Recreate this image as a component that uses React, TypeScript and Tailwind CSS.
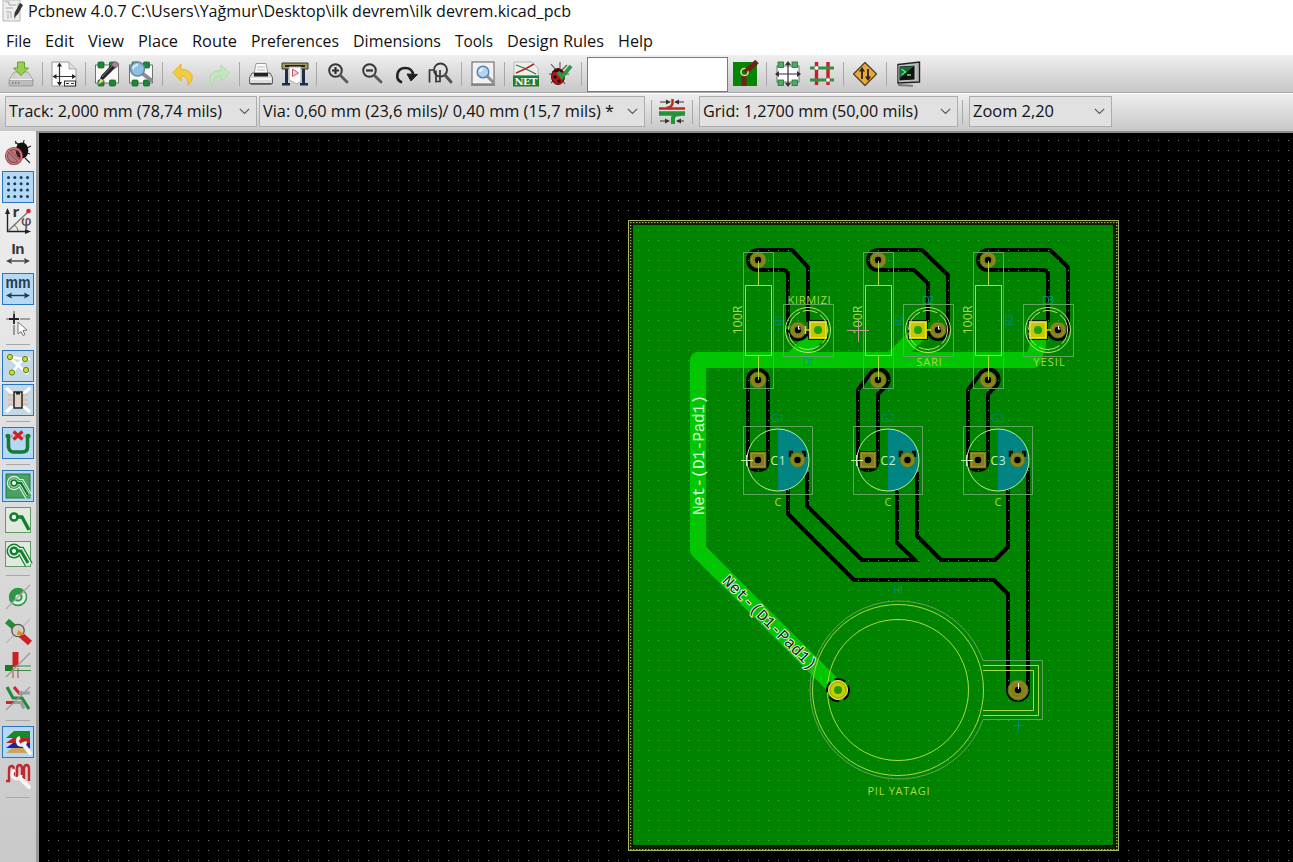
import React from 'react';

type Kids = { children?: React.ReactNode };

const Ico = ({ children }: Kids) => (
  <svg width="26" height="26" viewBox="0 0 26 26" className="block shrink-0 overflow-visible">{children}</svg>
);

const Magnifier = ({ sign }: { sign: string }) => (
  <Ico>
    <circle cx="10.500" cy="9.500" r="6.300" fill="none" stroke="#383838" strokeWidth="2" />
    <path d="M15.500 14.500l6.500 6.500" stroke="#5a5a5a" strokeWidth="2.800" strokeLinecap="round" />
    <path d={sign} stroke="#303030" strokeWidth="2.200" />
  </Ico>
);

const Chip = () => (
  <>
    <rect x="1.500" y="4" width="23" height="18" fill="#f8f8f8" stroke="#555" strokeWidth=".8" />
    {[4, 15.5].map((x) => [1, 19].map((y) => <rect key={x + '-' + y} x={x} y={y} width="6" height="6" rx="1" fill="#1c8a34" stroke="#14602a" strokeWidth=".8" />))}
  </>
);

const Arrows = ({ y, c = '#333' }: { y: number; c?: string }) => (
  <g transform={`translate(0 ${y})`} fill={c}>
    <path d="M4 0h18" stroke={c} strokeWidth="1.4" />
    <path d="M1 0l6-3-1 3 1 3zM25 0l-6-3 1 3-1 3z" />
  </g>
);

const icons: Record<string, React.ReactNode> = {
  save: <Ico><path d="M6 11h14l5 8v5a1 1 0 0 1-1 1H2a1 1 0 0 1-1-1v-5z" fill="#d2d2d2" stroke="#9b9b9b" strokeWidth=".8" /><path d="M1.500 19h23v5.500h-23z" fill="#bdbdbd" stroke="#959595" strokeWidth=".6" /><path d="M2 18.500h22" stroke="#f0f0f0" /><path d="M4 22h1.500M7 22h1.500M10 22h1.500" stroke="#777" strokeWidth="1.500" /><path d="M9.500 1h7v6h4L13 14.500 5.500 7h4z" fill="#9ace4c" stroke="#65a031" /></Ico>,
  page: <Ico><path d="M1 1h17l7 7v17H1z" fill="#fcfcfc" stroke="#9a9a9a" /><path d="M18 1v7h7" fill="#ddd" stroke="#aaa" /><path d="M8.500 3v21M3 15.500h20" stroke="#333" strokeWidth="1.200" /><path d="M8.500 1.500l2.500 4h-5zM8.500 25l-2.500-4h5zM1.500 15.500l4-2.500v5zM25 15.500l-4-2.500v5z" fill="#222" /><rect x="13.500" y="20" width="11" height="5" fill="#fff" stroke="#333" /><path d="M15 22.500h3m2 0h3" stroke="#333" /></Ico>,
  modedit: <Ico><Chip /><path d="M5 21l2-6L18 3l4 3L10 18z" fill="#252525" /><path d="M17 4l3-3q3-1 5 2l-3 4z" fill="#a8809c" stroke="#70506a" strokeWidth=".6" /><path d="M4 23.500l2.500-6 3.500 2.500z" fill="#e6d87c" /><path d="M8 16L19 4" stroke="#777" strokeWidth="1" /></Ico>,
  find: <Ico><Chip /><path d="M15 13l8 6" stroke="#8b8b96" strokeWidth="4" strokeLinecap="round" /><circle cx="9.500" cy="8" r="7" fill="#8fc0e2" stroke="#6787a2" strokeWidth="1.500" /><path d="M5 8a5 5 0 0 1 5-4" stroke="#d8efff" strokeWidth="2" fill="none" /></Ico>,
  undo: <Ico><path d="M10 3v5.500c11 0 15 8 7 16 0-7-1-9-7-9.500v5L2 11.500z" fill="#f4cc3e" stroke="#dda828" strokeWidth=".8" strokeLinejoin="round" /></Ico>,
  redo: <Ico><path d="M16 4v5.500c-10 0-14 7-8 15 0-6 1-9 8-9.500v5l8.500-8z" fill="#bfe8bb" stroke="#a8d7a5" strokeWidth=".8" strokeLinejoin="round" /></Ico>,
  print: <Ico><path d="M8 2.500h10l2 10.500H6z" fill="#fafafa" stroke="#888" strokeWidth=".8" /><path d="M9 6h8M9 9h8" stroke="#bbb" /><path d="M4 12h18l2.500 4.500v6h-23v-6z" fill="#dcdcdc" stroke="#555" strokeWidth=".9" /><path d="M6 12h14v3.500H6z" fill="#222" /><path d="M3 18h20" stroke="#fff" strokeWidth="1.500" /><path d="M2.500 22h21v1.800h-21z" fill="#555" /></Ico>,
  plot: <Ico><path d="M0 2h26v6H0z" fill="#a49a64" stroke="#3f3a20" /><path d="M3 5h20" stroke="#222" strokeWidth="2" /><path d="M3 8h3v15H3zM20 8h3v15h-3zM0 22h8v2.500H0zM18 22h8v2.500h-8z" fill="#1d2d4d" /><path d="M7 6h12v14l-4 3-8-4z" fill="#fff" stroke="#aaa" /><path d="M10.500 8l6 4-6 3.500z" fill="#f8ccd0" stroke="#d2545e" /></Ico>,
  zin: <Magnifier sign="M7 9.500h7M10.500 6v7" />,
  zout: <Magnifier sign="M7 9.500h7" />,
  redraw: <Ico><path d="M9 21.500C1 18 4 7 12 7c5 0 8 3 8 7" fill="none" stroke="#202020" strokeWidth="2.600" /><path d="M14 13l10.500.5-6.500 6.500z" fill="#202020" stroke="#202020" strokeLinejoin="round" /></Ico>,
  fit: <Ico><path d="M6 9H2.500v12.500M9 21.500V9.500M9 20.500h4V9" fill="none" stroke="#383838" strokeWidth="1.700" /><circle cx="13.500" cy="9" r="6.500" fill="none" stroke="#383838" strokeWidth="1.900" /><path d="M18 14l6 7" stroke="#505050" strokeWidth="2.800" strokeLinecap="round" /></Ico>,
  zarea: <Ico><rect x="2" y="1" width="22" height="22" fill="#f2f2f2" stroke="#5f5f5f" /><path d="M1 24h24" stroke="#777" strokeWidth="1.500" /><path d="M17 15l6 6" stroke="#8e8e98" strokeWidth="3" strokeLinecap="round" /><circle cx="13" cy="11" r="5.800" fill="#b4d4ee" stroke="#5885b6" strokeWidth="1.500" /><path d="M10 11a3 3 0 0 1 3-3" stroke="#e8f5ff" strokeWidth="2" fill="none" /></Ico>,
  net: <Ico><path d="M1 1h18l6 6v8H1z" fill="#eee" stroke="#aaa" strokeWidth=".8" /><path d="M3 4l8 3 12 6" stroke="#267832" strokeWidth="1.200" fill="none" /><path d="M3 12l9-4 9-5" stroke="#b12a24" strokeWidth="1.500" fill="none" /><rect x="0" y="14.500" width="26" height="11" fill="#1e7d2e" /><text x="13" y="24" fontSize="10" fontWeight="700" fill="#fff" textAnchor="middle" textLength="23" fontFamily="'DejaVu Serif', serif">NET</text></Ico>,
  drc: <Ico><path d="M4 3l5 6M13 1v6M2 13h20M4 22l5-5M18 23l-4-6M20 4l-6 6" stroke="#555" strokeWidth="1.100" /><ellipse cx="11" cy="15.500" rx="6.500" ry="8" fill="#b41418" stroke="#540608" /><path d="M5 11q6-7 12 0z" fill="#311" /><circle cx="8" cy="16" r="1.500" /><circle cx="12" cy="20" r="1.500" /><path d="M11 11l4 5 9-11" fill="none" stroke="#2a9a42" strokeWidth="3.800" /></Ico>,
  layer: <Ico><rect x="1" y="1" width="24" height="24" fill="#068406" /><path d="M25 0.500L15 10" stroke="#6e2418" strokeWidth="5" /><path d="M12 11v14" stroke="#6e2418" strokeWidth="5" /><circle cx="12.500" cy="11" r="3.600" fill="#068406" stroke="#e6dca2" strokeWidth="1.500" /><path d="M12.500 11l5-5" stroke="#6e2418" strokeWidth="3.500" /></Ico>,
  modmove: <Ico><rect x="2" y="5" width="22" height="16" fill="#fff" stroke="#555" strokeWidth=".8" />{[3, 17].map((x) => [1, 19].map((y) => <rect key={x + '-' + y} x={x} y={y} width="5.500" height="5.500" fill="#4aac64" stroke="#276b3a" strokeWidth=".8" />))}<path d="M13 2v22M1 13h24" stroke="#333" strokeWidth="1.200" /><path d="M13 0l3 4h-6zM13 26l-3-4h6zM0 13l4-3v6zM26 13l-4-3v6z" fill="#333" /></Ico>,
  tracks: <Ico><path d="M7.500 1v23M19 1v23" stroke="#c3202a" strokeWidth="3.400" /><path d="M1 7h24M1 19h24" stroke="#329239" strokeWidth="2.800" /><circle cx="7.500" cy="7" r="2.100" fill="#fff" stroke="#9a7a7a" strokeWidth=".6" /><circle cx="19" cy="19" r="2.100" fill="#fff" stroke="#9a7a7a" strokeWidth=".6" /></Ico>,
  router: <Ico><path d="M13 1.500L24.500 13 13 24.500 1.500 13z" fill="#eba83a" stroke="#4d4025" strokeWidth="1.200" strokeLinejoin="round" /><path d="M10 9v9M16 8v9" stroke="#222" strokeWidth="1.800" /><path d="M10 6l3 4.500H7zM16 20l-3-4.500h6z" fill="#222" /></Ico>,
  term: <Ico><path d="M3 3.500l21.500-2.500v20L3 22z" fill="#b6b6b6" stroke="#222" strokeWidth="1.400" /><path d="M4 5l16-1v15L4 20z" fill="#111" stroke="#e0e0e0" strokeWidth=".8" /><path d="M5 6l14-1-14 12z" fill="#176c3c" /><path d="M6.500 8l4 3-4 3M12 14h4" fill="none" stroke="#5de58a" strokeWidth="1.400" /><path d="M3 24l15 .8" stroke="#777" strokeWidth="1.800" /></Ico>,
  widths: <Ico><path d="M0 9.500h26" stroke="#bd2a22" strokeWidth="2.500" /><path d="M0 14.500h26" stroke="#22953a" strokeWidth="4.500" /><path d="M13.500 0v4q0 4-6 5" fill="none" stroke="#bd2a22" strokeWidth="2.500" /><path d="M22 15q-8 0-8 4v6" fill="none" stroke="#22953a" strokeWidth="4" /><path d="M1 3h9M25 3h-8M1 22h8M25 22h-7" stroke="#333" strokeWidth="1.200" /><path d="M12 3L7 .5v5zM15 3l5-2.500v5zM11 22l-5-2.500v5zM17 22l5-2.500v5z" fill="#333" /></Ico>,
  nodrc: <Ico><path d="M10 1l4 5M19 0l-1 6M22 8l4-2M22 13l3 1M20 18l5 5M10 3l9 2" stroke="#222" strokeWidth="1.100" fill="none" /><ellipse cx="17" cy="10.500" rx="6.300" ry="8" fill="#111" /><circle cx="9" cy="16" r="7.600" fill="#5a2a2e" fillOpacity=".55" stroke="#9b3c42" strokeWidth="3" /><path d="M4 11l10 10" stroke="#9b3c42" strokeWidth="3" /><circle cx="9" cy="16" r="7.600" fill="none" stroke="#cf7b80" strokeWidth="1.400" /><path d="M4 11l10 10" stroke="#cf7b80" strokeWidth="1.400" /></Ico>,
  grid: <Ico>{[3.5, 9.8, 16.1, 22.5].map((x) => [3.5, 9.8, 16.1, 22.5].map((y) => <circle key={x + '-' + y} cx={x} cy={y} r="1.500" fill="#173c5c" />))}</Ico>,
  polar: <Ico><path d="M2.500 2v21.500H23" fill="none" stroke="#222" strokeWidth="1.400" /><path d="M2.500 0l2.500 6H0zM26 23.500l-6-2.500v5z" fill="#222" /><path d="M3 23L23 4" stroke="#777" strokeWidth="1.500" /><path d="M9 17q4 2 4 6" fill="none" stroke="#666" /><circle cx="23.500" cy="3" r="2.300" fill="#d22635" /><text x="7.500" y="9" fontSize="15" fontWeight="700" fontFamily="'Open Sans', sans-serif" fill="#333">r</text><text x="16" y="18" fontSize="14" fontWeight="600" fontFamily="'Open Sans', sans-serif" fill="#5a4848">φ</text></Ico>,
  inch: <Ico><text x="13" y="11.500" fontSize="15" fontWeight="600" textAnchor="middle" fontFamily="'Liberation Sans', sans-serif" fill="#333" textLength="13">In</text><Arrows y={19} c="#444" /></Ico>,
  mm: <Ico><text x="13" y="11.500" fontSize="16" fontWeight="700" textAnchor="middle" fontFamily="'Liberation Sans', sans-serif" fill="#263c50" textLength="25" lengthAdjust="spacingAndGlyphs">mm</text><Arrows y={19.5} c="#20394f" /></Ico>,
  cursor: <Ico><path d="M9 1v3M1 9h3M15 9h10M9 15v10" stroke="#888" strokeWidth="1.600" /><path d="M9 4v10M4 9h10" stroke="#222" strokeWidth="1.800" /><path d="M13 12l9 8-4 .5 2 4-2 1-2-4-3 2.500z" fill="#fff" stroke="#666" strokeWidth=".9" /></Ico>,
  rats: <Ico><path d="M4 4l19 17M19 5L7 20M4 4l15 2 6 0M19 5L11 13" stroke="#fff" strokeWidth="2.500" fill="none" />{[[5, 4], [20, 6], [7, 19.5], [21, 17]].map(([x, y]) => <circle key={x} cx={x} cy={y} r="2.600" fill="#c8df2e" stroke="#6a7a14" />)}</Ico>,
  modrats: <Ico><path d="M9 8L1 1M9 18l-8 7M17 8l8-7M17 18l8 7" stroke="#fff" strokeWidth="3" /><path d="M3 8h20M3 12.800h20M3 17.500h20" stroke="#e8bda9" strokeWidth="2.500" /><rect x="9" y="5" width="8" height="16" fill="#dcd5c4" stroke="#222" strokeWidth="1.500" /><path d="M11 5h4v2.500h-4z" fill="#222" /></Ico>,
  autodel: <Ico><path d="M0 6h8M18 6h8" stroke="#aaa" strokeWidth="3" /><path d="M3.500 7v10q1 5 5 5h9q5 0 5-5V7" fill="none" stroke="#147a34" strokeWidth="3.600" /><circle cx="3" cy="6" r="2.300" fill="#147a34" /><circle cx="23" cy="6" r="2.300" fill="#147a34" /><path d="M8.500 1.500l9 8M17.500 1.500l-9 8" stroke="#cf2128" strokeWidth="3.200" /></Ico>,
  zfill: <Ico><rect x="1" y="1" width="24" height="24" fill="#48a063" stroke="#1f7d3a" /><path d="M9 10h7l8 14" fill="none" stroke="#e8f6e8" strokeWidth="8" /><circle cx="9" cy="10" r="7.200" fill="#e8f6e8" /><path d="M9 10h7l8 14" fill="none" stroke="#48a063" strokeWidth="6" /><circle cx="9" cy="10" r="6" fill="#48a063" /><path d="M9 10h7l7 12" fill="none" stroke="#e8f6e8" strokeWidth="3.800" /><circle cx="9" cy="10" r="4.200" fill="#0f7a2c" stroke="#e8f6e8" strokeWidth=".8" /><path d="M12 10h4l7 12" fill="none" stroke="#0f7a2c" strokeWidth="2.400" /><circle cx="9" cy="10" r="2" fill="#fff" /></Ico>,
  znone: <Ico><rect x=".5" y=".5" width="25" height="25" fill="#e2eadf" stroke="#5d9d62" /><path d="M10 10h7l7 13" fill="none" stroke="#11802d" strokeWidth="3.400" /><circle cx="9" cy="10" r="3.500" fill="#fff" stroke="#11802d" strokeWidth="2.600" /></Ico>,
  zoutl: <Ico><rect x=".5" y=".5" width="25" height="25" fill="#e2eadf" stroke="#5d9d62" /><path d="M9 10h7l8 14" fill="none" stroke="#11802d" strokeWidth="8.500" /><circle cx="9" cy="10" r="7.500" fill="#11802d" /><path d="M9 10h7l8 14" fill="none" stroke="#e8f2e6" strokeWidth="6" /><circle cx="9" cy="10" r="6" fill="#e8f2e6" /><path d="M10 10h6l7 12" fill="none" stroke="#11802d" strokeWidth="3" /><circle cx="9" cy="10" r="3.300" fill="#fff" stroke="#11802d" strokeWidth="2.500" /></Ico>,
  via: <Ico><circle cx="13" cy="13" r="9" fill="#2e9648" /><path d="M20 7a9 9 0 0 1-13 12z" fill="#e1ede0" /><circle cx="13" cy="13" r="8.500" fill="none" stroke="#2e9648" strokeWidth="1.300" /><circle cx="13" cy="13" r="3.600" fill="#dcebdc" stroke="#2e9648" strokeWidth="2" /><path d="M1 25L25 1" stroke="#aaa" strokeWidth="1.200" /></Ico>,
  trk: <Ico><path d="M2 3l8 7" stroke="#258d32" strokeWidth="6" /><path d="M16 17l9 8" stroke="#ce1e28" strokeWidth="6" /><path d="M1 25L25 1" stroke="#bbb" strokeWidth="1.200" /><circle cx="13" cy="12.500" r="6.200" fill="#d0cfc4" stroke="#555" strokeWidth="1.300" /><path d="M12 17l1-5 5 3 1 2z" fill="#e68a26" /></Ico>,
  contrast: <Ico><rect x="0" y="13" width="8" height="6" fill="#177c22" /><rect x="7.500" y="0" width="6" height="15" fill="#cc1f26" /><path d="M8 16v10M13 16v10" stroke="#c4555a" strokeWidth="1.200" /><path d="M9 14h17M9 18.500h17" stroke="#3d8a45" strokeWidth="1.200" /><path d="M1 25L25 1" stroke="#999" strokeWidth="1.200" /></Ico>,
  curved: <Ico><path d="M9 1l5 6h3M1 16.500h9" fill="none" stroke="#c42a30" strokeWidth="3" /><path d="M14 7h11M9 16.500h7l3 6" fill="none" stroke="#9c9c9c" strokeWidth="3" /><path d="M2 1l6 11h9l7 11" fill="none" stroke="#218d3c" strokeWidth="3.200" /><path d="M1 24L25 1" stroke="#999" strokeWidth="1.200" /></Ico>,
  layers: <Ico><path d="M1 24l7-6h17v6z" fill="#c9a75a" /><path d="M1 19l7-5h17v5z" fill="#24209a" /><path d="M1 14l7-5h17v5z" fill="#b72428" /><path d="M1 9l8-7h16v7z" fill="#178926" /><path d="M18 15l7 9" stroke="#f3f3f3" strokeWidth="4" strokeLinecap="round" /><path d="M15 8.500a4 4 0 1 0 5.500 4" fill="none" stroke="#f3f3f3" strokeWidth="3.200" /></Ico>,
  meander: <Ico><path d="M1 18h3V7q0-4 2.500-4T9 7v8h3V6q0-4 2.500-4T17 6v9h2V6q0-4 2.500-4T24 6v12" fill="none" stroke="#bf2a30" strokeWidth="2.400" /><path d="M15 15l9 9" stroke="#f5f5f5" strokeWidth="4" strokeLinecap="round" /><path d="M10 7a4.500 4.500 0 1 0 6 5" fill="none" stroke="#f5f5f5" strokeWidth="3.400" /></Ico>,
};

const TopIcon = ({ n }: { n: string }) => <button className="flex h-[34px] w-[34px] shrink-0 items-center justify-center">{icons[n]}</button>;
const VSep = () => <div className="flex w-[9px] shrink-0 justify-center"><div className="h-6 w-px bg-[#a8a8a8]" /></div>;
const HSep = () => <div className="flex h-[9px] shrink-0 items-center justify-center"><div className="h-px w-6 bg-[#a8a8a8]" /></div>;

const Bar = ({ names }: { names: string[] }) => <>{names.map((n, i) => (n === '|' ? <VSep key={i} /> : <TopIcon key={i} n={n} />))}</>;

const plain = 'flex h-8 w-8 items-center justify-center';
const lit = 'flex h-8 w-8 items-center justify-center border border-[#2a76bd] bg-[#b5d9f5]';
const soft = 'flex h-8 w-8 items-center justify-center border border-[#2a76bd] bg-[#c3d9e8]';

const side: [string, string][] = [
  ['nodrc', plain], ['grid', lit], ['polar', plain], ['inch', plain], ['mm', lit], ['cursor', plain], ['|', ''],
  ['rats', soft], ['modrats', soft], ['|', ''], ['autodel', lit], ['|', ''],
  ['zfill', lit], ['znone', plain], ['zoutl', plain], ['|', ''],
  ['via', plain], ['trk', plain], ['contrast', plain], ['curved', plain], ['|', ''],
  ['layers', lit], ['meander', plain], ['|', ''],
];

const Combo = ({ text, size, tw }: { text: string; size: string; tw: number }) => (
  <button className={`flex h-[31px] shrink-0 items-center justify-between border border-[#adadad] bg-[#e1e1e1] pl-[3px] pr-[6px] ${size}`}>
    <svg width={tw} height="24" className="block shrink-0 overflow-visible">
      <text x="0" y="17" fontSize="16.300" textLength={tw} lengthAdjust="spacingAndGlyphs" fill="#111">{text}</text>
    </svg>
    <svg width="11" height="7" viewBox="0 0 11 7"><path d="M.8.8l4.700 4.700L10.200.8" fill="none" stroke="#555" strokeWidth="1.100" /></svg>
  </button>
);

const menus: [string, string, number][] = [
  ['File', 'w-[39px]', 25], ['Edit', 'w-[43px]', 29], ['View', 'w-[50px]', 36], ['Place', 'w-[54px]', 40], ['Route', 'w-[59px]', 45],
  ['Preferences', 'w-[102px]', 88], ['Dimensions', 'w-[102px]', 88], ['Tools', 'w-[52px]', 38], ['Design Rules', 'w-[111px]', 97], ['Help', 'w-[50px]', 35],
];

const silk = '#a8dc40';
const fine = '#62a262';

const Pad = ({ x, y, r = 9 }: { x: number; y: number; r?: number }) => (
  <g><circle cx={x} cy={y} r={r - 1} fill="#857f1a" stroke="#4e7c14" /><circle cx={x} cy={y} r={r - 2.7} fill="none" stroke="#9a942a" strokeWidth=".8" /><circle cx={x} cy={y} r="3.200" fill="#000" /></g>
);

const Label = ({ x, y, w, s, c = silk, f = 11 }: { x: number; y: number; w: number; s: string; c?: string; f?: number }) => (
  <text x={x} y={y} fontSize={f} fill={c} textAnchor="middle" textLength={w} lengthAdjust="spacing" fontFamily="'Open Sans', sans-serif" fontWeight="400">{s}</text>
);

const Resistor = ({ x, id }: { x: number; id: string }) => (
  <g fill="none">
    <Pad x={x} y={260} /><Pad x={x} y={380} />
    <rect x={x - 14.5} y="252.500" width="30" height="136" stroke={fine} />
    <rect x={x - 12.5} y="285.500" width="26" height="70" stroke={silk} />
    <path d={`M${x + .5} 261v24M${x + .5} 356v24`} stroke={silk} />
    <g transform={`translate(${x - 16} 320) rotate(-90)`}><Label x={0} y={0} w={29} s="100R" f={12.5} /></g>
    <g transform={`translate(${x + 25} 320) rotate(-90)`}><Label x={0} y={0} w={12} s={id} c="#008a70" f={11} /></g>
  </g>
);

const Led = ({ x, flip, id, name, top }: { x: number; flip?: boolean; id: string; name: string; top?: boolean }) => {
  const sq = flip ? x + 10 : x - 10;
  const rd = flip ? x - 10 : x + 10;
  return (
    <g>
      <path d={`M${rd - 10} 329a10 10 0 0 0 20 0`} fill="none" stroke="#000" strokeWidth="4" />
      <Pad x={rd} y={330} />
      <rect x={sq - 9.5} y="320.500" width="19" height="19" fill="#c9cc00" stroke="#101800" />
      <rect x={sq - 7.5} y="322.500" width="15" height="15" fill="#c6c800" stroke="#dbe04a" />
      <circle cx={sq} cy="330" r="4" fill="#22a008" />
      <path d={`M${x - 2.5} 326v8M${x - 2} 330h5`} stroke="#e0dc10" strokeWidth="1.500" />
      <path d={`M${rd + .5} 326v3h2`} stroke="#fff" fill="none" strokeWidth="1.200" />
      <g fill="none" stroke="#b8ea70"><circle cx={x} cy="330" r="22.500" /><circle cx={x} cy="330" r="19.500" strokeDasharray="15 3 22 3" /></g>
      <rect x={x - 24.5} y="304.500" width="50" height="52" fill="none" stroke={fine} />
      <Label x={x + 1} y={top ? 303.5 : 366} w={top ? 43 : name.length * 6.3} s={name} />
      <Label x={x} y={top ? 366 : 303.5} w={12} s={id} c="#009c80" />
    </g>
  );
};

const Cap = ({ x, n }: { x: number; n: number }) => (
  <g>
    <path d={`M${x} 429a31 31 0 0 1 0 62z`} fill="#008484" />
    <circle cx={x} cy="460" r="31" fill="none" stroke="#b8eca0" />
    <rect x={x - 34.5} y="426.500" width="69" height="68" fill="none" stroke={fine} />
    <rect x={x - 28.5} y="451.500" width="17" height="17" fill="#857f1a" stroke="#1c2600" />
    <rect x={x - 26.5} y="453.500" width="13" height="13" fill="none" stroke="#9a942a" />
    <circle cx={x - 20} cy="460" r="3.300" />
    <path d={`M${x + 12} 457v-5h3M${x + 27} 457v-5h-3`} fill="none" stroke="#000" strokeWidth="2.500" />
    <Pad x={x + 19.5} y={460} r={8.5} />
    <path d={`M${x - 37} 460.500h12M${x - 31.5} 455v11`} stroke="#c4ecac" />
    <Label x={x} y={464.5} w={15} s={`C${n}`} c="#c8f4c4" f={12} />
    <Label x={x} y={506} w={7} s="C" />
    <Label x={x} y={422} w={14} s={`G${n}`} c="#008a70" />
  </g>
);

const Board = () => (
  <svg width="1254" height="729" viewBox="39 133 1254 729" className="block">
    <defs>
      <pattern id="dots" width="10" height="10" patternUnits="userSpaceOnUse" x="8" y="0"><rect width="1" height="1" fill="#7c7c7c" /></pattern>
      <pattern id="gdots" width="10" height="10" patternUnits="userSpaceOnUse" x="8" y="0"><rect width="1" height="1" fill="#48ac48" /></pattern>
      <pattern id="tick" width="3" height="3" patternUnits="userSpaceOnUse"><rect width="1.500" height="1.200" fill="#9fae72" /></pattern>
    </defs>
    <rect x="39" y="133" width="1254" height="729" fill="#000" />
    <rect x="39" y="133" width="1254" height="729" fill="url(#dots)" />
    <rect x="631" y="223" width="485" height="625" fill="none" stroke="#0c1a00" strokeWidth="5" />
    <rect x="630" y="222" width="487" height="627" fill="none" stroke="url(#tick)" strokeWidth="3" />
    <rect x="628.500" y="220.500" width="490" height="630" fill="none" stroke="#a9b765" />
    <rect x="633" y="225" width="480" height="620" rx="1" fill="#008400" />
    <g fill="none" stroke="#000" strokeWidth="4" strokeLinejoin="round">
      <path d="M808 322V267L792 250H758a10 10 0 0 0 0 20H783q5 0 5 5V326" />
      <path d="M948 330V275L922 250H878a10 10 0 0 0 0 20H914L928 283V322" />
      <path d="M1068 330V267L1050 250H988a10 10 0 0 0 0 20H1043q5 0 5 5V322" />
      <path d="M748 460V380a10 10 0 0 1 20 0V460q0 10-10 10t-10-10" />
      <path d="M858 460V390L870 374a9.500 9.500 0 0 1 17 11L878 394V460q-1 10-10 10t-10-10" />
      <path d="M968 460V390L980 374a9.500 9.500 0 0 1 17 11L988 394V460q-1 10-10 10t-10-10" />
      <path d="M788 488V514L854 580H994L1008 594V690a10 10 0 0 0 20 0V468" />
      <path d="M807 472V506L862 560H915L897 543V488" strokeLinejoin="miter" />
      <path d="M917 472V536L941 560H995L1008 547V488" />
    </g>
    <g fill="none" stroke="#00c800" strokeWidth="16" strokeLinejoin="round" strokeLinecap="round">
      <path d="M838 690L698 550V360H1033L1038 345V334" />
      <path d="M818 334L796 356M918 334L894 358" />
    </g>
    <rect x="634" y="226" width="478" height="618" fill="url(#gdots)" />
    <Resistor x={758} id="R1" /><Resistor x={878} id="R2" /><Resistor x={988} id="R3" />
    <Led x={808} flip id="D1" name="KIRMIZI" top /><Led x={928} id="D2" name="SARI" /><Led x={1048} id="D3" name="YESIL" />
    <Cap x={778} n={1} /><Cap x={888} n={2} /><Cap x={998} n={3} />
    <g fill="none" stroke={silk}>
      <circle cx="898" cy="690" r="70.500" /><circle cx="898" cy="690" r="85.500" />
      <path d="M983 665.500H1038.500V715.500H983M983 670.500H1033.500V710.500H983" />
      <path d="M983 660.500A89 89 0 1 0 983 719.500H1042.500V660.500H983" stroke={fine} />
    </g>
    <circle cx="838" cy="690" r="11" fill="none" stroke="#000" strokeWidth="2" strokeDasharray="11 5" />
    <circle cx="838" cy="690" r="9.500" fill="#c9cc00" stroke="#e6ea70" /><circle cx="838" cy="690" r="8" fill="none" stroke="#8e9800" strokeWidth=".7" /><circle cx="838" cy="690" r="4" fill="#22a008" />
    <Pad x={1018} y={690} r={11} /><path d="M1018.500 683v6" stroke="#fff" />
    <path d="M1013 725.500h10M1018.500 720v11" stroke="#009070" />
    <Label x={899} y={594} w={11} s="H1" c="#008c88" f={10} />
    <Label x={898.5} y={794.5} w={62} s="PIL YATAGI" />
    <path d="M847 330.500h22M858.500 320v22" stroke="#c09a90" />
    <g fontFamily="'Liberation Mono', monospace" fontSize="16" textAnchor="middle">
      <text transform="translate(704 455) rotate(-90)" textLength="120" lengthAdjust="spacing" fill="#d5ffd0">Net-(D1-Pad1)</text>
      <text transform="translate(766 626) rotate(45)" textLength="126" lengthAdjust="spacing" fill="#102a10" stroke="#e6ffe0" strokeWidth="1.800" paintOrder="stroke">Net-(D1-Pad1)</text>
    </g>
  </svg>
);

export default function App() {
  return (
    <div className="flex h-[862px] w-[1293px] flex-col overflow-hidden bg-white font-['Open_Sans','Noto_Sans',sans-serif] text-[#111]">
      <header className="flex h-[23px] shrink-0 items-start pl-0.5">
        <svg width="22" height="22" viewBox="0 0 22 22" className="mr-1 block">
          <path d="M1 0h17v21H1z" fill="#eee" stroke="#b5b5b5" /><path d="M3 2h4v3h7M4 8h7M4 12h5v6M13 12v7M16 3v5M6 14v5" stroke="#aaa" fill="none" /><path d="M18 3l3 2-5 9-4 4 1-6z" fill="#333" />
        </svg>
        <svg width="544" height="22" className="block overflow-visible"><text x="0" y="17" fontSize="16.200" fill="#111" textLength="543" lengthAdjust="spacingAndGlyphs">Pcbnew 4.0.7 C:\Users\Yağmur\Desktop\ilk devrem\ilk devrem.kicad_pcb</text></svg>
      </header>
      <nav className="flex h-8 shrink-0 items-center pl-1.5">
        {menus.map(([m, w, tw]) => (
          <button key={m} className={`shrink-0 text-left ${w}`}>
            <svg width={tw} height="24" className="block overflow-visible"><text x="0" y="20" fontSize="16.300" textLength={tw} lengthAdjust="spacingAndGlyphs" fill="#111">{m}</text></svg>
          </button>
        ))}
      </nav>
      <div className="flex h-[38px] shrink-0 items-center border-b border-[#a9a9a9] border-t border-t-[#f0f0f0] bg-gradient-to-b from-[#eeeeee] to-[#c8c8c8] pl-1">
        <Bar names={['save', '|', 'page', '|', 'modedit', 'find', '|', 'undo', 'redo', '|', 'print', 'plot', '|', 'zin', 'zout', 'redraw', 'fit', '|', 'zarea', '|', 'net', 'drc', '|']} />
        <div className="ml-px h-[35px] w-[141px] shrink-0 self-end border border-[#7a7a7a] bg-white" />
        <Bar names={['layer', '|', 'modmove', 'tracks', '|', 'router', '|', 'term']} />
      </div>
      <div className="flex h-[38px] shrink-0 items-center border-t border-white bg-gradient-to-b from-[#eeeeee] to-[#c8c8c8] pb-[2px] pl-[5px]">
        <Combo text="Track: 2,000 mm (78,74 mils)" size="w-[252px]" tw={213} />
        <div className="w-[2px]" />
        <Combo text="Via: 0,60 mm (23,6 mils)/ 0,40 mm (15,7 mils) *" size="w-[386px]" tw={351} />
        <div className="w-[2px]" />
        <VSep />
        <div className="flex w-[32px] shrink-0 justify-center">{icons.widths}</div>
        <VSep />
        <div className="w-[2px]" />
        <Combo text="Grid: 1,2700 mm (50,00 mils)" size="w-[259px]" tw={215} />
        <VSep />
        <div className="w-[2px]" />
        <Combo text="Zoom 2,20" size="w-[143px]" tw={81} />
      </div>
      <main className="flex min-h-0 flex-1">
        <aside className="flex w-[39px] shrink-0 flex-col border-r-[3px] border-[#999] bg-gradient-to-b from-[#f1f1f1] to-[#c9c9c9] pt-[5px]">
          {side.map(([n, look], i) => n === '|' ? <HSep key={i} /> : (
            <button key={i} className="flex h-[34px] shrink-0 items-center justify-center">
              <span className={look}>{icons[n]}</span>
            </button>
          ))}
        </aside>
        <section className="flex-1 overflow-hidden border-t-2 border-[#8a8a8a] bg-black"><Board /></section>
      </main>
    </div>
  );
}
